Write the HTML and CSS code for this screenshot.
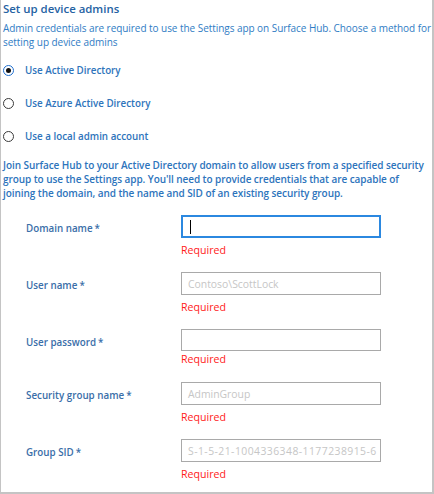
FILE: index.html
```html
<!DOCTYPE html>
<html lang="en">
<head>
<meta charset="utf-8">
<title>Set up device admins</title>
<link rel="stylesheet" href="styles.css">
</head>
<body>
<div class="panel">
  <h1 class="title">Set up device admins</h1>
  <p class="desc">Admin credentials are required to use the Settings app on Surface Hub. Choose a method for setting up device admins</p>
  <div class="options">
    <div class="option"><span class="radio radio-on"></span><span class="option-label">Use Active Directory</span></div>
    <div class="option"><span class="radio"></span><span class="option-label">Use Azure Active Directory</span></div>
    <div class="option"><span class="radio"></span><span class="option-label">Use a local admin account</span></div>
  </div>
  <p class="intro">Join Surface Hub to your Active Directory domain to allow users from a specified security group to use the Settings app. You'll need to provide credentials that are capable of joining the domain, and the name and SID of an existing security group.</p>
  <div class="form">
    <div class="row">
      <div class="label">Domain name<span class="star">*</span></div>
      <div class="field">
        <div class="input input-focus"><span class="caret"></span></div>
        <div class="error">Required</div>
      </div>
    </div>
    <div class="row">
      <div class="label">User name<span class="star">*</span></div>
      <div class="field">
        <div class="input"><span class="ph">Contoso\ScottLock</span></div>
        <div class="error">Required</div>
      </div>
    </div>
    <div class="row row-pw">
      <div class="label">User password<span class="star">*</span></div>
      <div class="field">
        <div class="input input-pw"></div>
        <div class="error">Required</div>
      </div>
    </div>
    <div class="row">
      <div class="label">Security group name<span class="star">*</span></div>
      <div class="field">
        <div class="input"><span class="ph">AdminGroup</span></div>
        <div class="error">Required</div>
      </div>
    </div>
    <div class="row">
      <div class="label">Group SID<span class="star">*</span></div>
      <div class="field">
        <div class="input"><span class="ph ph-sid">S-1-5-21-1004336348-1177238915-6</span></div>
        <div class="error">Required</div>
      </div>
    </div>
  </div>
</div>
</body>
</html>
```

FILE: styles.css
```css
html, body {
  margin: 0;
  padding: 0;
  background: #ffffff;
}

.panel {
  box-sizing: border-box;
  width: 434px;
  height: 494px;
  border-left: 1px solid #c4c4c4;
  border-right: 2px solid #c4c4c4;
  border-bottom: 2px solid #c4c4c4;
  padding: 1px 0 0 2px;
  font-family: "Open Sans", "Noto Sans", sans-serif;
  overflow: hidden;
}

.title {
  margin: 0;
  font-size: 11.4px;
  font-weight: 600;
  line-height: 16px;
  color: #2562a3;
}

.desc {
  margin: 4px 0 0;
  font-size: 10px;
  letter-spacing: -0.05px;
  line-height: 14px;
  color: #2f7cc4;
}

.options {
  margin-top: 5px;
  display: flex;
  flex-direction: column;
}

.option {
  height: 33px;
  display: flex;
  align-items: center;
}

.radio {
  box-sizing: border-box;
  width: 11px;
  height: 11px;
  border: 1.5px solid #3a3a3a;
  border-radius: 50%;
  display: flex;
  align-items: center;
  justify-content: center;
}

.radio-on {
  border-color: #1f6fd0;
}

.radio-on::after {
  content: "";
  width: 5px;
  height: 5px;
  border-radius: 50%;
  background: #111111;
}

.option-label {
  margin-left: 11px;
  font-size: 9.8px;
  font-weight: 600;
  color: #2e74bb;
}

.intro {
  margin: 5px 0 0;
  font-size: 10px;
  letter-spacing: -0.07px;
  font-weight: 600;
  line-height: 14px;
  color: #2d74bc;
}

.form {
  margin-top: 15px;
  display: flex;
  flex-direction: column;
}

.row {
  display: flex;
  height: 57px;
}

.row-pw {
  height: 53px;
}

.label {
  box-sizing: border-box;
  width: 178px;
  padding: 6px 0 0 23px;
  font-size: 9.8px;
  line-height: 16px;
  font-weight: 600;
  color: #3a6ea8;
}

.star {
  margin-left: 2px;
}

.field {
  display: flex;
  flex-direction: column;
}

.input {
  box-sizing: border-box;
  width: 200px;
  height: 23px;
  border: 1px solid #a9a9a9;
  padding: 0 6px;
  display: flex;
  align-items: center;
  overflow: hidden;
  white-space: nowrap;
}

.input-focus {
  border: 2px solid #2b88e0;
  padding: 0 5px;
}

.input-pw {
  height: 22px;
}

.caret {
  width: 1px;
  height: 14px;
  margin-left: 2px;
  background: #000000;
}

.ph {
  font-size: 10.4px;
  color: #c6c6c6;
}

.ph-sid {
  letter-spacing: 0.45px;
}

.error {
  margin-top: 4px;
  font-size: 10.6px;
  line-height: 16px;
  color: #ff1a1a;
}

.row-pw .error {
  margin-top: 0;
}
```
